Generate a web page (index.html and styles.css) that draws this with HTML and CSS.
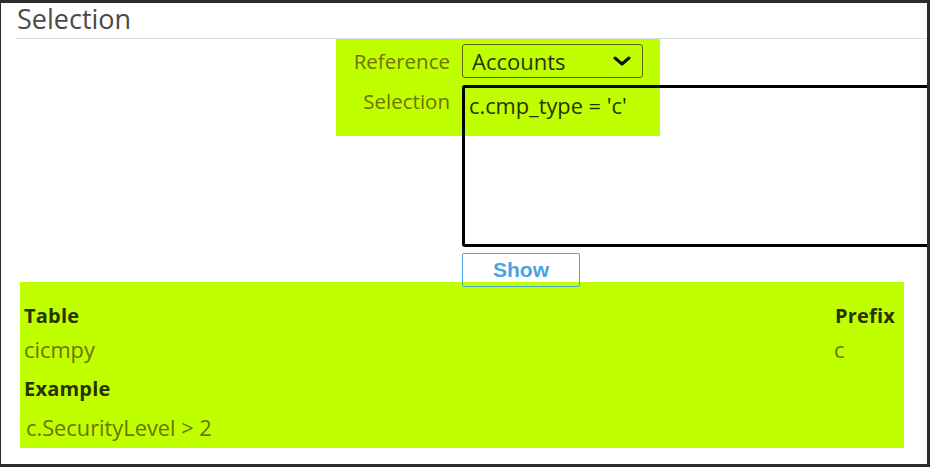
FILE: index.html
```html
<!DOCTYPE html>
<html>
<head>
<meta charset="utf-8">
<link rel="stylesheet" href="styles.css">
</head>
<body>
<div class="page">
  <h1 class="title">Selection</h1>
  <div class="form">
    <label class="lbl">Reference</label>
    <div class="select">
      <span class="select-text">Accounts</span>
      <svg class="chev" width="18" height="12" viewBox="0 0 18 12"><polyline points="2,3 9,9 16,3" fill="none" stroke="#111" stroke-width="3" stroke-linecap="round" stroke-linejoin="round"/></svg>
    </div>
    <label class="lbl lbl-sel">Selection</label>
    <div class="textarea">c.cmp_type = 'c'</div>
    <div></div>
    <button class="show">Show</button>
  </div>
  <div class="info">
    <div class="row head"><span>Table</span><span>Prefix</span></div>
    <div class="row val"><span>cicmpy</span><span class="pfx">c</span></div>
    <div class="row head ex"><span>Example</span></div>
    <div class="row val ex2"><span>c.SecurityLevel &gt; 2</span></div>
  </div>
</div>
</body>
</html>
```
FILE: styles.css
```css
* { box-sizing: border-box; }
html, body { margin: 0; padding: 0; }
body {
  background: #2b2b2b;
  padding: 3px 3px 3px 1px;
  width: 930px;
  height: 467px;
  overflow: hidden;
  font-family: "Open Sans", sans-serif;
}
.page {
  background: #fff;
  width: 926px;
  height: 461px;
  overflow-x: clip;
  overflow-y: visible;
}
.title {
  margin: 0 0 0 15px;
  height: 36px;
  border-bottom: 1px solid #dcdcdc;
  font-weight: 400;
  font-size: 27px;
  line-height: 29px;
  padding: 1px 0 0 1px;
  color: #4a4a4a;
}
.form {
  margin-left: 335px;
  display: grid;
  grid-template-columns: 126px auto;
  align-items: start;
  background: linear-gradient(#bfff00, #bfff00) no-repeat 0 0 / 324px 97px;
}
.lbl {
  text-align: right;
  padding-right: 12px;
  font-size: 20.5px;
  color: #6e7300;
  line-height: 34px;
  margin-top: 5px;
}
.lbl-sel { margin-top: 8px; line-height: 30px; }
.select {
  margin-top: 5px;
  width: 181px;
  height: 34px;
  border: 1px solid #5f6600;
  border-radius: 3px;
  display: flex;
  align-items: center;
  justify-content: space-between;
  padding: 0 11px 0 9px;
  font-size: 22px;
  color: #2a3300;
}
.chev { display: block; }
.textarea {
  margin-top: 7px;
  width: 480px;
  height: 162px;
  border: 3px solid #000;
  border-radius: 3px;
  padding: 2px 4px;
  font-size: 21.8px;
  line-height: 31px;
  color: #2a3300;
}
.show {
  position: relative;
  z-index: 1;
  margin-top: 6px;
  width: 118px;
  height: 34px;
  background: transparent;
  border: 1px solid #4aa3df;
  border-radius: 2px;
  color: #4aa3df;
  font-family: "Liberation Sans", Arial, sans-serif;
  font-weight: 700;
  font-size: 21px;
  padding: 0;
}
.info {
  margin: -5px 0 0 19px;
  width: 884px;
  height: 166px;
  background: #bfff00;
  padding: 17px 9px 0 4px;
}
.row {
  display: flex;
  justify-content: space-between;
  line-height: 34px;
}
.head { font-weight: 700; font-size: 20px; color: #2a3300; letter-spacing: 0.2px; }
.val { font-size: 21.8px; color: #6e7300; }
.pfx { width: 61px; }
.ex { margin-top: 5px; }
.ex2 { margin-top: 5px; padding-left: 2px; }
```
